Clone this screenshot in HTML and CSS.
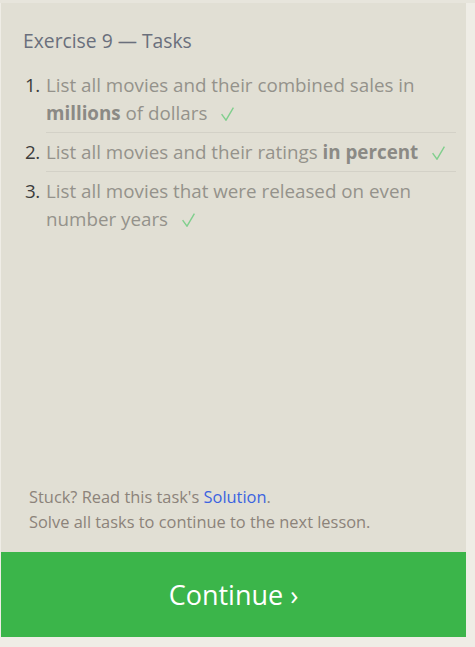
FILE: index.html
```html
<!DOCTYPE html>
<html lang="en">
<head>
<meta charset="utf-8">
<title>Exercise 9 — Tasks</title>
<link rel="stylesheet" href="styles.css">
</head>
<body>
<div class="panel">
  <div class="content">
    <h2 class="title">Exercise 9 — Tasks</h2>
    <ol class="tasks">
      <li class="task"><span class="num">1.</span><span class="text">List all movies and their combined sales in <b>millions</b> of dollars <svg class="check" viewBox="0 0 13 14" width="13" height="14"><polyline points="0.6,7.2 5,13.2 12.4,0.6"/></svg></span></li>
      <li class="task"><span class="num">2.</span><span class="text">List all movies and their ratings <b>in percent</b> <svg class="check" viewBox="0 0 13 14" width="13" height="14"><polyline points="0.6,7.2 5,13.2 12.4,0.6"/></svg></span></li>
      <li class="task last"><span class="num">3.</span><span class="text">List all movies that were released on even number years <svg class="check" viewBox="0 0 13 14" width="13" height="14"><polyline points="0.6,7.2 5,13.2 12.4,0.6"/></svg></span></li>
    </ol>
  </div>
  <div class="footer">
    <p>Stuck? Read this task's <a href="#">Solution</a>.</p>
    <p>Solve all tasks to continue to the next lesson.</p>
  </div>
  <button class="continue">Continue ›</button>
</div>
</body>
</html>
```
FILE: styles.css
```css
html, body {
  margin: 0;
  padding: 0;
}
body {
  background: #efede6;
  font-family: "Open Sans", "Noto Sans", sans-serif;
  border-top: 3px solid #e7e5dc;
}
.panel {
  margin-left: 1px;
  width: 465px;
  height: 634px;
  background: #e1dfd4;
  display: flex;
  flex-direction: column;
}
.content {
  padding: 24px 10px 0 22px;
  flex: 1;
}
.title {
  margin: 0;
  font-size: 19.3px;
  font-weight: 400;
  line-height: 28px;
  color: #6a6f7c;
}
.tasks {
  list-style: none;
  margin: 16px 0 0;
  padding: 0;
}
.task {
  display: flex;
  font-size: 18.8px;
  line-height: 28px;
}
.num {
  width: 23px;
  flex: none;
  padding-left: 2px;
  color: #3c3c3c;
  box-sizing: border-box;
  letter-spacing: -0.5px;
}
.text {
  flex: 1;
  color: #94928b;
  padding: 0 0 5px;
  border-bottom: 1px solid #d3d1c7;
}
.task + .task .text {
  padding-top: 5px;
}
.task + .task .num {
  padding-top: 5px;
}
.task.last .text {
  border-bottom: none;
}
.text b {
  font-weight: 700;
  color: #8b8a85;
}
.check {
  margin-left: 9px;
  vertical-align: -1px;
  fill: none;
  stroke: #80cf8d;
  stroke-width: 1.4;
}
.footer {
  padding: 0 10px 18px 28px;
  font-size: 16.4px;
  line-height: 25px;
  color: #8c837a;
}
.footer p {
  margin: 0;
}
.footer a {
  color: #3b63e0;
  text-decoration: none;
}
.continue {
  display: block;
  width: 100%;
  height: 85px;
  border: none;
  margin: 0;
  background: #3bb54a;
  color: #ffffff;
  font-family: "Open Sans", "Noto Sans", sans-serif;
  font-size: 27px;
  cursor: pointer;
}
```
